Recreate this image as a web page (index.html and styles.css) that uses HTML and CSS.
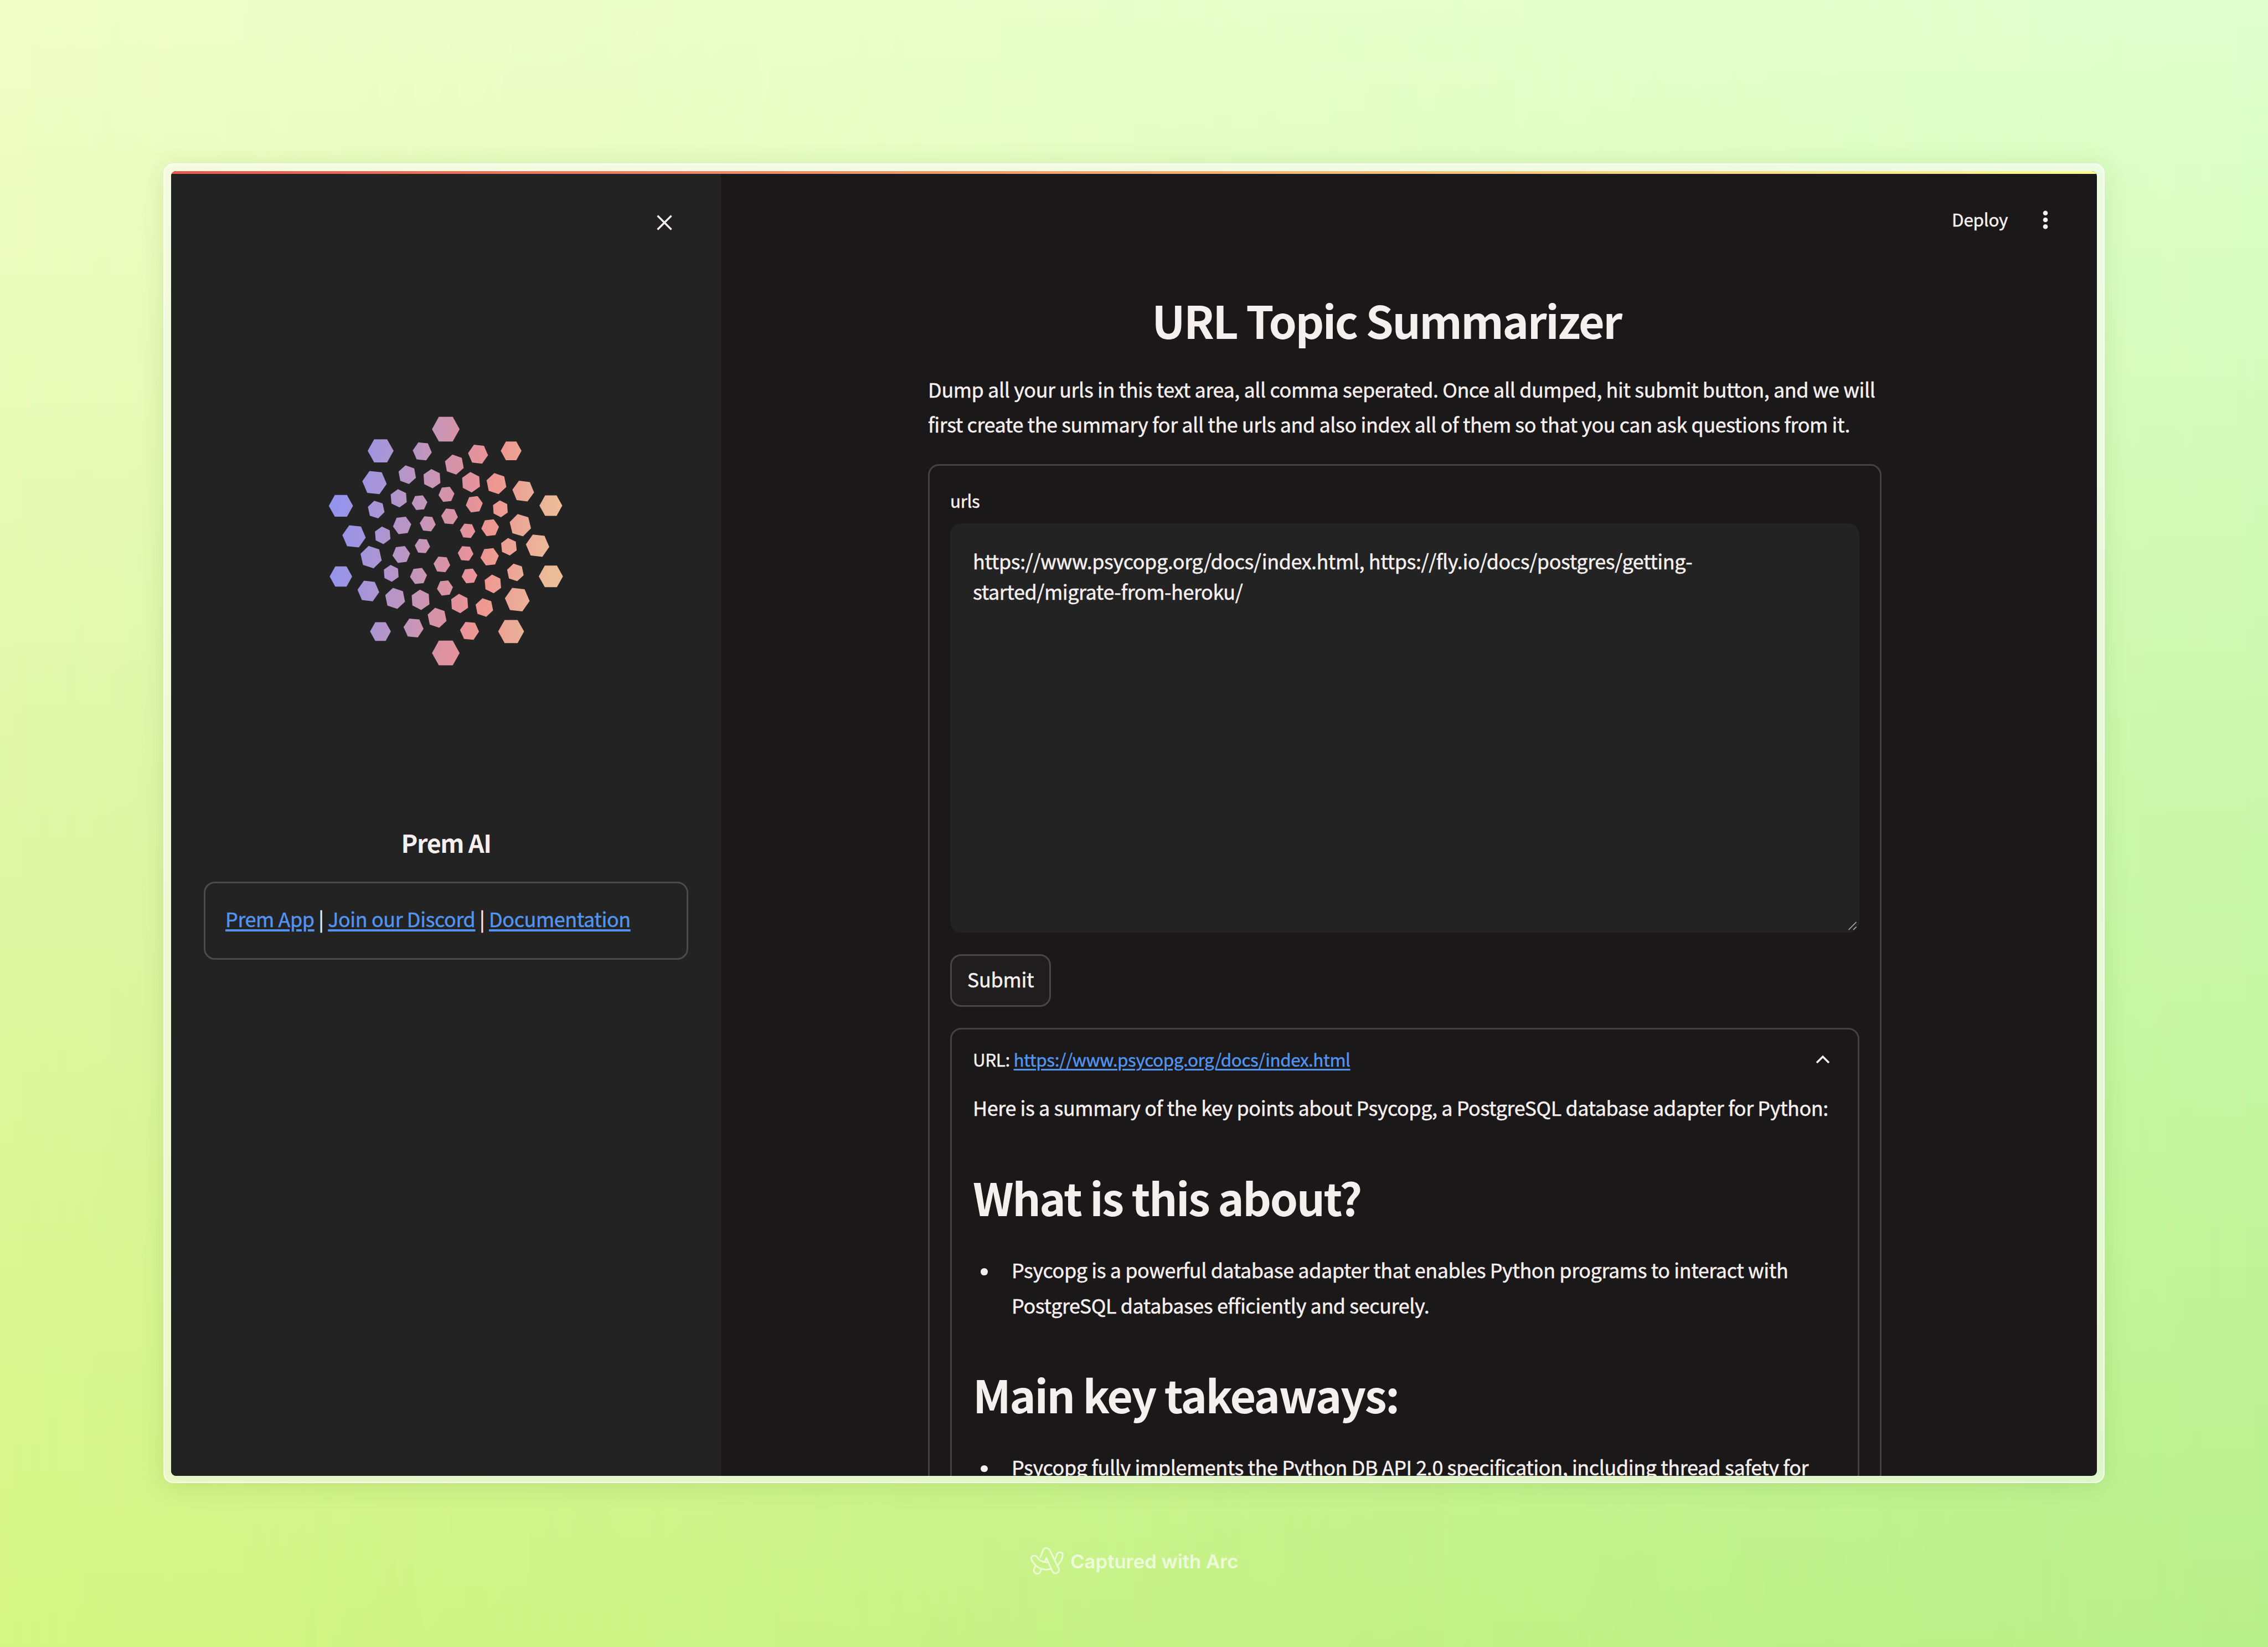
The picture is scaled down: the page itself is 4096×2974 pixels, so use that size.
FILE: index.html
```html
<!DOCTYPE html>
<html lang="en">
<head>
<meta charset="utf-8">
<title>URL Topic Summarizer</title>
<link rel="stylesheet" href="styles.css">
</head>
<body>
<div class="stage">
  <div class="frame">
    <div class="app">
      <div class="decoration"></div>
      <aside class="sidebar">
        <div class="sidebar-top">
          <svg class="close" viewBox="0 0 28 28"><path d="M1.5 1.5 26.5 26.5M26.5 1.5 1.5 26.5"/></svg>
        </div>
        <svg class="logo" viewBox="0 0 1568 1568" preserveAspectRatio="none">
          <defs>
            <linearGradient id="spectrum" gradientUnits="userSpaceOnUse" x1="90" y1="700" x2="1480" y2="867">
              <stop offset=".04" stop-color="#9594ec"/>
              <stop offset=".2" stop-color="#a895d7"/>
              <stop offset=".33" stop-color="#ba95c4"/>
              <stop offset=".42" stop-color="#c996b6"/>
              <stop offset=".5" stop-color="#d693a6"/>
              <stop offset=".61" stop-color="#e7939a"/>
              <stop offset=".69" stop-color="#ef9891"/>
              <stop offset=".82" stop-color="#ebaa97"/>
              <stop offset=".96" stop-color="#edbd98"/>
            </linearGradient>
            <polygon id="hex" points="1,0 .5,.866 -.5,.866 -1,0 -.5,-.866 .5,-.866"/>
            <clipPath id="cells">
              <use href="#hex" transform="translate(786 160) scale(81)"/>
              <use href="#hex" transform="translate(404 283) scale(76)"/>
              <use href="#hex" transform="translate(1169 283) scale(61)"/>
              <use href="#hex" transform="translate(171 595) scale(71)"/>
              <use href="#hex" transform="translate(1402 594) scale(67)"/>
              <use href="#hex" transform="translate(171 996) scale(66)"/>
              <use href="#hex" transform="translate(1402 995) scale(71)"/>
              <use href="#hex" transform="translate(403 1308) scale(61)"/>
              <use href="#hex" transform="translate(1169 1308) scale(76)"/>
              <use href="#hex" transform="translate(786 1430) scale(81)"/>
              <use href="#hex" transform="translate(648 286) rotate(6) scale(56)"/>
              <use href="#hex" transform="translate(975 302) rotate(6) scale(59)"/>
              <use href="#hex" transform="translate(836 361) rotate(19) scale(58)"/>
              <use href="#hex" transform="translate(560 418) rotate(19) scale(54)"/>
              <use href="#hex" transform="translate(705 441) rotate(26) scale(55)"/>
              <use href="#hex" transform="translate(368 463) rotate(6) scale(72)"/>
              <use href="#hex" transform="translate(934 461) rotate(26) scale(58)"/>
              <use href="#hex" transform="translate(1083 469) rotate(18) scale(61)"/>
              <use href="#hex" transform="translate(1240 511) rotate(7) scale(64)"/>
              <use href="#hex" transform="translate(790 530) rotate(-6) scale(47)"/>
              <use href="#hex" transform="translate(510 552) rotate(25) scale(52)"/>
              <use href="#hex" transform="translate(632 577) rotate(-5) scale(46)"/>
              <use href="#hex" transform="translate(953 586) rotate(-7) scale(50)"/>
              <use href="#hex" transform="translate(378 616) rotate(17) scale(51)"/>
              <use href="#hex" transform="translate(1106 612) rotate(26) scale(48)"/>
              <use href="#hex" transform="translate(808 655) rotate(5) scale(49)"/>
              <use href="#hex" transform="translate(530 706) rotate(-7) scale(54)"/>
              <use href="#hex" transform="translate(680 697) rotate(5) scale(47)"/>
              <use href="#hex" transform="translate(1223 705) rotate(16) scale(65)"/>
              <use href="#hex" transform="translate(914 737) rotate(5) scale(45)"/>
              <use href="#hex" transform="translate(1046 719) rotate(-6) scale(52)"/>
              <use href="#hex" transform="translate(248 768) rotate(6) scale(69)"/>
              <use href="#hex" transform="translate(416 762) rotate(25) scale(50)"/>
              <use href="#hex" transform="translate(1324 821) rotate(6) scale(69)"/>
              <use href="#hex" transform="translate(649 823) rotate(4) scale(45)"/>
              <use href="#hex" transform="translate(1156 827) rotate(24) scale(50)"/>
              <use href="#hex" transform="translate(525 871) rotate(-7) scale(52)"/>
              <use href="#hex" transform="translate(902 865) rotate(4) scale(46)"/>
              <use href="#hex" transform="translate(1043 884) rotate(-6) scale(54)"/>
              <use href="#hex" transform="translate(348 886) rotate(17) scale(65)"/>
              <use href="#hex" transform="translate(763 927) rotate(5) scale(49)"/>
              <use href="#hex" transform="translate(466 978) rotate(26) scale(48)"/>
              <use href="#hex" transform="translate(1194 973) rotate(18) scale(51)"/>
              <use href="#hex" transform="translate(626 993) rotate(-6) scale(50)"/>
              <use href="#hex" transform="translate(925 993) rotate(-5) scale(46)"/>
              <use href="#hex" transform="translate(1062 1038) rotate(25) scale(53)"/>
              <use href="#hex" transform="translate(332 1078) rotate(6) scale(64)"/>
              <use href="#hex" transform="translate(781 1061) rotate(-6) scale(47)"/>
              <use href="#hex" transform="translate(1205 1127) rotate(6) scale(73)"/>
              <use href="#hex" transform="translate(489 1120) rotate(18) scale(61)"/>
              <use href="#hex" transform="translate(638 1128) rotate(26) scale(58)"/>
              <use href="#hex" transform="translate(867 1149) rotate(26) scale(55)"/>
              <use href="#hex" transform="translate(1012 1172) rotate(18) scale(54)"/>
              <use href="#hex" transform="translate(735 1230) rotate(18) scale(58)"/>
              <use href="#hex" transform="translate(597 1288) rotate(5) scale(59)"/>
              <use href="#hex" transform="translate(925 1304) rotate(5) scale(56)"/>
            </clipPath>
          </defs>
          <rect width="1568" height="1568" fill="url(#spectrum)" clip-path="url(#cells)"/>
        </svg>
        <h2 class="brand">Prem AI</h2>
        <div class="links"><a href="#">Prem App</a> | <a href="#">Join our Discord</a> | <a href="#">Documentation</a></div>
      </aside>
      <main class="main">
        <header class="toolbar">
          <span class="deploy">Deploy</span>
          <svg class="dots" viewBox="0 0 10 36"><circle cx="5" cy="5.7" r="4.3"/><circle cx="5" cy="18" r="4.3"/><circle cx="5" cy="30.3" r="4.3"/></svg>
        </header>
        <div class="column">
          <h1 class="title">URL Topic Summarizer</h1>
          <p class="intro">Dump all your urls in this text area, all comma seperated. Once all dumped, hit submit button, and we will<br>first create the summary for all the urls and also index all of them so that you can ask questions from it.</p>
          <section class="form">
            <label class="label">urls</label>
            <div class="textarea">https://www.psycopg.org/docs/index.html, https://fly.io/docs/postgres/getting-<br>started/migrate-from-heroku/<svg class="grip" viewBox="0 0 18 18"><path d="M1.5 16 15.5 2M10 16l5.5-5.5" /></svg></div>
            <button class="submit">Submit</button>
            <section class="expander">
              <div class="summary">
                <span>URL: <a href="#">https://www.psycopg.org/docs/index.html</a></span>
                <svg class="chevron" viewBox="0 0 26 16"><path d="M2 14 13 3 24 14"/></svg>
              </div>
              <p class="text">Here is a summary of the key points about Psycopg, a PostgreSQL database adapter for Python:</p>
              <h1 class="heading">What is this about?</h1>
              <ul class="list"><li><span>Psycopg is a powerful database adapter that enables Python programs to interact with<br>PostgreSQL databases efficiently and securely.</span></li></ul>
              <h1 class="heading">Main key takeaways:</h1>
              <ul class="list"><li><span>Psycopg fully implements the Python DB API 2.0 specification, including thread safety for</span></li></ul>
            </section>
          </section>
        </div>
      </main>
    </div>
  </div>
  <footer class="credit">
    <svg class="arc" viewBox="0 0 270 252">
      <path d="M90 105 110 55C118 33 148 33 157 55L217 178C226 204 184 224 173 193L133 106 123 130"/>
      <path d="M71 100C58 78 24 92 33 116C46 150 86 184 133 184Q150 184 164 178M71 100C86 124 112 137 146 134"/>
      <path d="M190 115Q200 101 203 85C208 60 246 62 244 86Q240 122 209 153"/>
      <path d="M58 160 50 181C42 206 76 224 90 202L99 181"/>
    </svg>
    <span>Captured with Arc</span>
  </footer>
</div>
</body>
</html>
```
FILE: styles.css
```css
* { box-sizing: border-box; margin: 0; padding: 0; }
html, body { width: 4096px; height: 2974px; overflow: hidden; }
body {
  font-family: "Noto Sans CJK JP", "Noto Sans", sans-serif;
  font-size: 35.9px;
  line-height: 63.6px;
  letter-spacing: -0.4px;
  color: #f5efef;
  -webkit-text-stroke: .5px currentColor;
}
.stage {
  position: relative;
  width: 4096px;
  height: 2974px;
  padding-top: 295.4px;
  display: flex;
  flex-direction: column;
  align-items: center;
  background: linear-gradient(#f2fec8, #e9fab7 25%, #e0f7a6 50%, #dbf694 75%, #d5f583);
  isolation: isolate;
}
/* second vertical ramp, faded in towards the right edge */
.stage::before {
  content: "";
  position: absolute;
  inset: 0;
  z-index: -1;
  background: linear-gradient(#dfffcd, #d5fbbb 25%, #c9f6aa 50%, #c1f49a 75%, #b8ef8a);
  -webkit-mask-image: linear-gradient(90deg, transparent, #000);
  mask-image: linear-gradient(90deg, transparent, #000);
}
.frame {
  width: 3505.2px;
  height: 2383px;
  padding: 11.7px;
  border: 2px solid rgba(255, 255, 255, .65);
  border-radius: 18px;
  background: rgba(250, 250, 250, .56);
  box-shadow: 0 5px 44px rgba(50, 100, 0, .13);
  flex: none;
}
.app {
  position: relative;
  display: flex;
  width: 100%;
  height: 100%;
  overflow: hidden;
  border-radius: 9px;
  background: #1a1818;
}
.decoration {
  position: absolute;
  inset: 0 0 auto 0;
  height: 5px;
  background: linear-gradient(90deg, #e95954, #fbfa92);
}
a { color: #5294ef; text-decoration: underline; text-decoration-thickness: 3.6px; text-underline-offset: 4px; }

.sidebar {
  flex: none;
  width: 993px;
  padding: 0 59px;
  display: flex;
  flex-direction: column;
  align-items: center;
  background: #232323;
}
.sidebar-top {
  align-self: stretch;
  height: 186.2px;
  padding-right: 29.2px;
  display: flex;
  align-items: center;
  justify-content: flex-end;
}
.close { width: 28px; height: 28px; fill: none; stroke: #f5efef; stroke-width: 3.4; }
.logo { width: 483px; height: 499.1px; margin: 229px 2px 0 0; flex: none; }
.brand {
  margin-top: 267.7px;
  font-size: 44.8px;
  line-height: 60px;
  letter-spacing: -1.4px;
}
.brand, .title, .heading, .credit { -webkit-text-stroke: 0; }
.links {
  align-self: stretch;
  height: 141.4px;
  margin-top: 40.5px;
  padding: 32.2px 36px;
  border: 3px solid #4b4b4b;
  border-radius: 20px;
  white-space: nowrap;
}

.main { flex: 1; min-width: 0; }
.toolbar {
  height: 176px;
  padding-right: 87.7px;
  display: flex;
  align-items: center;
  justify-content: flex-end;
  gap: 63px;
}
.deploy { font-size: 31.4px; line-height: 44px; letter-spacing: -.25px; padding-bottom: 2.8px; }
.dots { width: 10px; height: 36px; fill: #f5efef; }

.column { width: 1722px; margin-left: 374px; }
.title {
  margin-top: 44.1px;
  padding-right: 66px;
  text-align: center;
}
.title, .heading { font-size: 80.5px; line-height: 96px; letter-spacing: -2.45px; white-space: nowrap; }
.intro { margin-top: 45.4px; white-space: nowrap; }
.form {
  margin-top: 40.4px;
  padding: 38px 37px 0;
  border: 3px solid #434141;
  border-radius: 20px;
  height: 2400px;
}
.label { display: block; font-size: 31.4px; line-height: 50px; }
.textarea {
  position: relative;
  height: 739px;
  margin-top: 16px;
  padding: 39.5px 41px;
  border-radius: 20px;
  line-height: 55.6px;
  background: #232323;
}
.grip { position: absolute; right: 3px; bottom: 3px; width: 18px; height: 18px; fill: none; stroke: #b5b3b3; stroke-width: 1.6; }
.submit {
  display: flex;
  align-items: center;
  justify-content: center;
  width: 182px;
  height: 95px;
  margin-top: 38.7px;
  padding-bottom: 5px;
  border: 3px solid #484545;
  border-radius: 20px;
  background: #1f1d1e;
  color: inherit;
  font: inherit;
  letter-spacing: -.25px;
}
.expander {
  height: 1500px;
  margin-top: 38.5px;
  padding: 29px 38px 0;
  border: 3px solid #434141;
  border-radius: 20px;
}
.summary {
  display: flex;
  align-items: center;
  justify-content: space-between;
  padding-right: 12px;
  font-size: 31.4px;
  line-height: 50px;
}
.summary a { text-decoration-thickness: 2.5px; text-underline-offset: 3.5px; }
.chevron { width: 26px; height: 16px; fill: none; stroke: #f5efef; stroke-width: 3.6; }
.text { margin-top: 30px; white-space: nowrap; }
.heading { margin-top: 81.4px; }
.list { margin-top: 52px; list-style: none; }
.list li { display: grid; grid-template-columns: 70px 1fr; white-space: nowrap; }
.list li::before {
  content: "";
  width: 12.6px;
  height: 12.6px;
  margin: 29px 0 0 14px;
  border-radius: 50%;
  background: #f5efef;
}
.list + .heading { margin-top: 80.2px; }

.credit {
  display: flex;
  align-items: center;
  gap: 7px;
  height: 67.6px;
  margin-top: 107px;
  padding-right: 6px;
  color: rgba(255, 255, 255, .7);
  font: 600 34.7px/44px Inter, sans-serif;
  letter-spacing: 0;
}
.arc {
  width: 72.5px;
  height: 67.6px;
  fill: none;
  stroke: #fff;
  stroke-width: 10.5;
  stroke-linejoin: round;
  opacity: .7;
}
```
